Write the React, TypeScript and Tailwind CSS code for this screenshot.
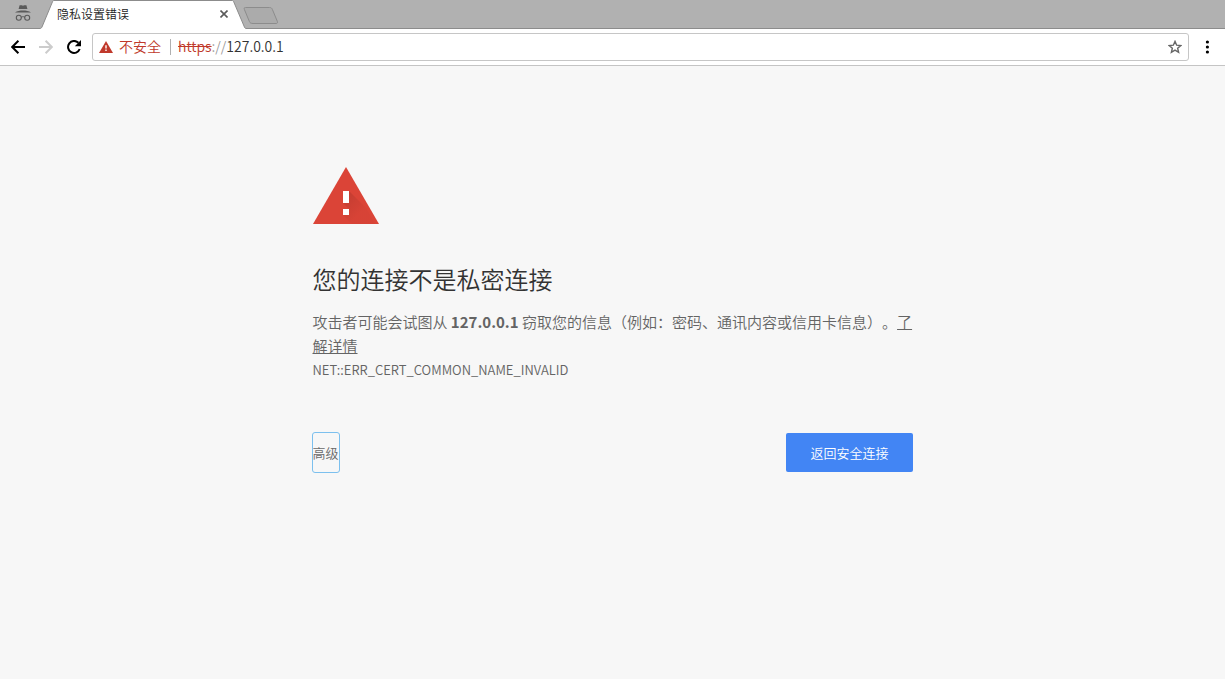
import { useState } from "react";
import type { ReactNode } from "react";

interface IconButtonProps {
  label: string;
  disabled?: boolean;
  className?: string;
  children: ReactNode;
}

function IconButton({ label, disabled, className = "", children }: IconButtonProps) {
  return (
    <button
      type="button"
      aria-label={label}
      disabled={disabled}
      className={`flex h-7 shrink-0 items-center justify-center ${className}`}
    >
      {children}
    </button>
  );
}

function IncognitoIcon() {
  return (
    <svg width="16" height="16" viewBox="0 0 16 16" fill="none" aria-hidden="true">
      <path d="M4.6 0.2h2.2l1.2.5 1.2-.5h2.2l1 3.8H3.6z" fill="#5a5a5a" />
      <path d="M0 7.6c2-1.5 5-2 8-2s6 .5 8 2z" fill="#5a5a5a" />
      <circle cx="3.8" cy="12.7" r="2.5" stroke="#5a5a5a" strokeWidth="1.1" />
      <circle cx="12.2" cy="12.7" r="2.5" stroke="#5a5a5a" strokeWidth="1.1" />
      <path d="M6.2 12.4c.9-.9 2.7-.9 3.6 0" stroke="#5a5a5a" strokeWidth="1.1" />
    </svg>
  );
}

function TabStrip() {
  return (
    <div className="flex h-[29px] bg-[#b1b1b1]">
      <div className="flex w-10 shrink-0 justify-center border-b border-[#8c8c8c] pt-[5px] pl-[6px]">
        <IncognitoIcon />
      </div>

      {/* Active tab */}
      <div className="flex shrink-0">
        <svg width="14" height="29" viewBox="0 0 14 29" aria-hidden="true">
          <path d="M14 0.5C13 0.5 12.8 1 12.4 2L2.4 26C1.8 27.6 1.2 28.5 0 28.5V29H14z" fill="#fff" />
          <path
            d="M14 0.5C13 0.5 12.8 1 12.4 2L2.4 26C1.8 27.6 1.2 28.5 0 28.5"
            fill="none"
            stroke="#8c8c8c"
          />
        </svg>
        <div className="flex w-[178px] items-center justify-between border-t border-[#8c8c8c] bg-white pb-[2px] pl-[3px]">
          <span className="text-[12px] leading-4 text-[#222]">隐私设置错误</span>
          <button
            type="button"
            aria-label="关闭标签页"
            className="flex h-4 w-4 items-center justify-center"
          >
            <svg width="8" height="8" viewBox="0 0 8 8" aria-hidden="true">
              <path d="M0.5 0.5l7 7M7.5 0.5l-7 7" stroke="#5a5a5a" strokeWidth="1.6" />
            </svg>
          </button>
        </div>
        <svg width="14" height="29" viewBox="0 0 14 29" aria-hidden="true">
          <path d="M0 0.5C1 0.5 1.4 1 1.8 2L12 26C12.6 27.6 13 28.5 14 28.5V29H0z" fill="#fff" />
          <path
            d="M0 0.5C1 0.5 1.4 1 1.8 2L12 26C12.6 27.6 13 28.5 14 28.5"
            fill="none"
            stroke="#8c8c8c"
          />
        </svg>
      </div>

      <div className="flex flex-1 items-start border-b border-[#8c8c8c] pt-[7px]">
        <button type="button" aria-label="打开新的标签页" className="-ml-[3px]">
          <svg width="36" height="18" viewBox="0 0 36 18" aria-hidden="true">
            <path
              d="M2.5 0.5H26.5C28 0.5 28.8 1 29.4 2.5L34.4 14.5C34.8 16 34.2 16.5 33 16.5H10C8 16.5 7 16 6.4 14.5L1.4 2.5C0.9 1 1.2 0.5 2.5 0.5z"
              fill="#ababab"
              stroke="#8c8c8c"
            />
          </svg>
        </button>
      </div>
    </div>
  );
}

function Toolbar() {
  const [host, setHost] = useState("127.0.0.1");

  return (
    <div className="flex h-[37px] items-center border-b border-[#c4c4c4] bg-white pl-1">
      <IconButton label="后退" className="w-7">
        <svg width="14" height="14" viewBox="0 0 14 14" fill="none" stroke="#000" strokeWidth="2" aria-hidden="true">
          <path d="M14 7H1.6M7.4 0.8L1.2 7l6.2 6.2" />
        </svg>
      </IconButton>
      <IconButton label="前进" disabled className="w-7">
        <svg width="14" height="14" viewBox="0 0 14 14" fill="none" stroke="#ccc" strokeWidth="2" aria-hidden="true">
          <path d="M0 7h12.4M6.6 0.8L12.8 7l-6.2 6.2" />
        </svg>
      </IconButton>
      <IconButton label="重新加载" className="w-7">
        <svg width="14" height="14" viewBox="0 0 14 14" aria-hidden="true">
          <path d="M12.7 9A6 6 0 1 1 11.4 2.8" fill="none" stroke="#000" strokeWidth="2" />
          <path d="M14 0v6.2H7.8z" fill="#000" />
        </svg>
      </IconButton>

      {/* Address bar */}
      <form
        onSubmit={(e) => e.preventDefault()}
        className="ml-1 flex h-7 min-w-0 flex-1 items-center rounded-[3px] border border-[#c6c6c6] bg-white pl-[6px] text-[14px] leading-5"
      >
        <button type="button" className="flex shrink-0 items-center gap-[6px] text-[#c0392b]">
          <svg width="14" height="12" viewBox="0 0 14 12" aria-hidden="true">
            <path d="M7 0l7 12H0z" fill="#c0392b" />
            <path d="M6.3 4.2h1.4v3.2H6.3zM6.3 8.6h1.4V10H6.3z" fill="#fff" />
          </svg>
          <span className="pb-[2px]">不安全</span>
        </button>
        <span className="mr-[7px] ml-[9px] h-4 w-px shrink-0 bg-[#b0b0b0]" />
        <label htmlFor="address" className="shrink-0 pb-[2px] text-[#999]">
          <span className="text-[#c0392b] line-through">https</span>://
        </label>
        <input
          id="address"
          type="text"
          value={host}
          onChange={(e) => setHost(e.target.value)}
          className="min-w-0 flex-1 bg-transparent pb-[2px] text-[#333] outline-none"
        />
        <IconButton label="为此网页添加书签" className="w-[26px]">
          <svg width="14" height="14" viewBox="0 0 14 14" aria-hidden="true">
            <path
              d="M7 1.4l1.65 3.8 4.1.35-3.1 2.7.95 4.05L7 10.15l-3.6 2.15.95-4.05-3.1-2.7 4.1-.35z"
              fill="none"
              stroke="#666"
              strokeWidth="1.4"
            />
          </svg>
        </IconButton>
      </form>

      <IconButton label="自定义及控制" className="w-9">
        <svg width="4" height="14" viewBox="0 0 4 14" aria-hidden="true">
          <circle cx="2.4" cy="2" r="1.6" />
          <circle cx="2.4" cy="7" r="1.6" />
          <circle cx="2.4" cy="12" r="1.6" />
        </svg>
      </IconButton>
    </div>
  );
}

function WarningIcon() {
  return (
    <svg width="66" height="57" viewBox="0 0 66 57" aria-hidden="true">
      <defs>
        <linearGradient id="shade" x1="0" y1="0" x2="1" y2="1">
          <stop offset="0" stopColor="#b5382d" stopOpacity="0.7" />
          <stop offset="0.6" stopColor="#b5382d" stopOpacity="0.1" />
        </linearGradient>
      </defs>
      <path d="M33 0l33 57H0z" fill="#db4437" />
      <path d="M36 24l17.5 17.5L62 57H39L30 48l6-6-6-6z" fill="url(#shade)" />
      <path d="M30 24h6v12h-6zM30 42h6v6h-6z" fill="#fff" />
    </svg>
  );
}

export default function App() {
  return (
    <div
      lang="zh-CN"
      className="flex min-h-screen flex-col bg-[#f7f7f7] font-['Noto_Sans_CJK_SC',sans-serif] font-[350]"
    >
      <TabStrip />
      <Toolbar />

      <main className="mx-auto w-full max-w-[600px] pt-[101px] text-[#646464]">
        <WarningIcon />
        <h1 className="mt-10 text-[24px] leading-[30px] font-[350] text-[#333]">
          您的连接不是私密连接
        </h1>
        <p className="mt-4 text-[15px] leading-6 [text-spacing-trim:space-all]">
          攻击者可能会试图从 <strong className="font-bold">127.0.0.1</strong>{" "}
          窃取您的信息{"\uFF08"}例如{"\uFF1A"}密码、通讯内容或信用卡信息{"\uFF09"}。
          <a href="#details" className="underline">
            了解详情
          </a>
        </p>
        <div className="text-[13px] leading-6">NET::ERR_CERT_COMMON_NAME_INVALID</div>

        <div className="mt-[51px] flex items-center justify-between text-[13px] leading-5">
          <button
            type="button"
            className="h-[39px] rounded-[2px] text-[#696969] outline outline-[#7cc0ee]"
          >
            高级
          </button>
          <button type="button" className="h-[39px] rounded-[2px] bg-[#4285f4] px-6 text-white">
            返回安全连接
          </button>
        </div>
      </main>
    </div>
  );
}
